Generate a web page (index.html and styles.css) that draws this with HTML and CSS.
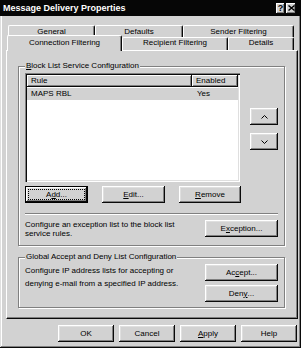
FILE: index.html
```html
<!DOCTYPE html>
<html>
<head>
<meta charset="utf-8">
<title>Message Delivery Properties</title>
<link rel="stylesheet" href="styles.css">
</head>
<body>
<div class="window">
  <div class="titlebar">
    <span class="title">Message Delivery Properties</span>
    <div class="tb-buttons">
      <span class="tb-btn help">?</span>
      <span class="tb-btn close"><svg width="7" height="6" viewBox="0 0 7 6"><path d="M0.5 0.5 L6.5 5.5 M6.5 0.5 L0.5 5.5" stroke="#000" stroke-width="1.4" fill="none"/></svg></span>
    </div>
  </div>
  <div class="tabs">
    <div class="tabrow back">
      <div class="tab t-general">General</div>
      <div class="tab t-defaults">Defaults</div>
      <div class="tab t-sender">Sender Filtering</div>
    </div>
    <div class="tabrow front">
      <div class="tab active t-conn">Connection Filtering</div>
      <div class="tab t-recip">Recipient Filtering</div>
      <div class="tab t-details">Details</div>
    </div>
  </div>
  <div class="panel">
    <fieldset class="group g1">
      <legend><u>B</u>lock List Service Configuration</legend>
      <div class="list-row">
        <div class="listview">
          <div class="lv-header">
            <div class="lv-col c-rule">Rule</div>
            <div class="lv-col c-enabled">Enabled</div>
          </div>
          <div class="lv-item selected">
            <span class="c-rule">MAPS RBL</span>
            <span class="c-enabled">Yes</span>
          </div>
        </div>
        <div class="arrows">
          <button class="btn arrow"><svg width="7" height="4" viewBox="0 0 7 4"><path d="M0.5 3.5 L3.5 0.5 L6.5 3.5" fill="none" stroke="#000"/></svg></button>
          <button class="btn arrow"><svg width="7" height="4" viewBox="0 0 7 4"><path d="M0.5 0.5 L3.5 3.5 L6.5 0.5" fill="none" stroke="#000"/></svg></button>
        </div>
      </div>
      <div class="btn-row">
        <button class="btn default w63"><span class="focus">A<u>d</u>d...</span></button>
        <button class="btn w63"><u>E</u>dit...</button>
        <button class="btn w62"><u>R</u>emove</button>
      </div>
      <div class="separator"></div>
      <div class="desc-row">
        <p class="desc tight">Configure an exception list to the block list<br>service rules.</p>
        <button class="btn w73">E<u>x</u>ception...</button>
      </div>
    </fieldset>
    <fieldset class="group g2">
      <legend>Global Accept and Deny List Configuration</legend>
      <div class="desc-row">
        <p class="desc loose">Configure IP address lists for accepting or<br>denying e-mail from a specified IP address.</p>
        <div class="btn-col">
          <button class="btn w73">Ac<u>c</u>ept...</button>
          <button class="btn w73">Den<u>y</u>...</button>
        </div>
      </div>
    </fieldset>
  </div>
  <div class="footer">
    <button class="btn w56">OK</button>
    <button class="btn w56">Cancel</button>
    <button class="btn w56"><u>A</u>pply</button>
    <button class="btn w56">Help</button>
  </div>
</div>
</body>
</html>
```

FILE: styles.css
```css
* { box-sizing: border-box; }
html, body { margin: 0; padding: 0; }
body {
  background: #fff;
  font-family: "Liberation Sans", Arial, sans-serif;
  font-size: 8px;
  color: #000;
}
u { text-decoration: underline; text-underline-offset: 1px; }

.window {
  width: 301px;
  height: 348px;
  background: #d2d2d2;
  box-shadow: inset -1px -1px #0a0a0a, inset 1px 1px #dfdfdf, inset -2px -2px #808080, inset 2px 2px #fff;
  display: flex;
  flex-direction: column;
}

.titlebar {
  height: 16px;
  background: #060606;
  color: #fff;
  display: flex;
  align-items: center;
  justify-content: space-between;
  padding: 0 5px 0 3px;
}
.title { font-weight: bold; font-size: 9px; }
.tb-buttons { display: flex; gap: 1px; }
.tb-btn {
  width: 9px;
  height: 11px;
  background: #d2d2d2;
  color: #000;
  font-weight: bold;
  font-size: 9px;
  line-height: 11px;
  display: flex;
  align-items: center;
  justify-content: center;
  box-shadow: inset -1px -1px #0a0a0a, inset 1px 1px #fff, inset -2px -2px #808080;
}
.tb-btn.close { width: 10px; }

.tabs { margin-top: 9px; }
.tabrow { display: flex; padding-left: 8px; }
.tabrow.back { height: 12px; }
.tabrow.front { height: 13px; }
.tab {
  border-top: 1px solid #fff;
  border-left: 1px solid #fff;
  border-right: 1px solid #0a0a0a;
  box-shadow: inset -1px 0 #808080;
  border-radius: 2px 2px 0 0;
  text-align: center;
  line-height: 10px;
  white-space: nowrap;
}
.back .tab { padding-top: 1px; }
.tab.active {
  position: relative;
  z-index: 1;
  margin-top: -2px;
  margin-left: -1px;
  height: 16px;
  padding-top: 2px;
  background: #d2d2d2;
}
.t-general { width: 87px; }
.t-defaults { width: 88px; }
.t-sender { width: 111px; }
.t-conn { width: 115px; }
.t-recip { width: 106px; }
.t-details { width: 66px; }

.panel {
  margin: 0 3px 0 6px;
  height: 269px;
  border-top: 1px solid #fff;
  border-left: 1px solid #fff;
  border-right: 1px solid #0a0a0a;
  border-bottom: 1px solid #0a0a0a;
  box-shadow: inset -1px -1px #808080;
  padding: 10px 12px 0 11px;
}

.group {
  margin: 0;
  padding: 2px 6px 7px 6px;
  border: 1px solid #808080;
  box-shadow: 1px 1px 0 #fff, inset 1px 1px 0 #fff;
  min-width: 0;
}
.group legend {
  padding: 0 1px;
  line-height: 10px;
  background: #d2d2d2;
}
.g2 { margin-top: 6px; padding-bottom: 5px; }

.btn {
  font: inherit;
  color: #000;
  border: 0;
  padding: 0;
  margin: 0;
  height: 17px;
  background: #d2d2d2;
  box-shadow: inset -1px -1px #0a0a0a, inset 1px 1px #fff, inset -2px -2px #808080, inset 2px 2px #dfdfdf;
  display: flex;
  align-items: center;
  justify-content: center;
  line-height: 10px;
}
.btn.default {
  box-shadow: inset 0 0 0 1px #000, inset -2px -2px #0a0a0a, inset 2px 2px #fff, inset -3px -3px #808080, inset 3px 3px #dfdfdf;
  align-items: stretch;
}
.btn .focus {
  flex: 1;
  margin: 3px;
  border: 1px dotted #000;
  display: flex;
  align-items: center;
  justify-content: center;
}
.w56 { width: 56px; }
.w62 { width: 62px; }
.w63 { width: 63px; }
.w73 { width: 73px; }

.list-row { display: flex; justify-content: space-between; }
.listview {
  width: 215px;
  height: 109px;
  background: #fff;
  box-shadow: inset 1px 1px #808080, inset 2px 2px #0a0a0a, inset -1px -1px #fff, inset -2px -2px #dfdfdf;
  padding: 2px;
}
.lv-header { display: flex; height: 12px; }
.lv-col {
  background: #d2d2d2;
  box-shadow: inset -1px -1px #0a0a0a, inset 1px 1px #fff, inset -2px -2px #808080;
  line-height: 12px;
}
.c-rule { width: 165px; padding-left: 4px; }
.c-enabled { flex: 1; padding-left: 4px; }
.lv-item { display: flex; height: 12px; line-height: 12px; margin-top: 1px; }
.lv-item.selected { background: #d2d2d2; }
.lv-item .c-enabled { padding-left: 5px; }

.arrows {
  display: flex;
  flex-direction: column;
  gap: 8px;
  padding-top: 35px;
}
.btn.arrow { width: 28px; }

.btn-row { display: flex; gap: 14px; margin-top: 4px; }

.separator {
  margin-top: 10px;
  height: 2px;
  border-top: 1px solid #808080;
  border-bottom: 1px solid #fff;
}

.desc-row {
  display: flex;
  justify-content: space-between;
  align-items: flex-start;
  margin-top: 5px;
}
.g2 .desc-row { margin-top: 0; }
.desc { margin: 0; }
.desc.tight { line-height: 9px; }
.desc.loose { line-height: 13px; }
.btn-col { display: flex; flex-direction: column; gap: 4px; }

.footer {
  display: flex;
  justify-content: flex-end;
  gap: 5px;
  padding-right: 4px;
  margin-top: 6px;
}
```
